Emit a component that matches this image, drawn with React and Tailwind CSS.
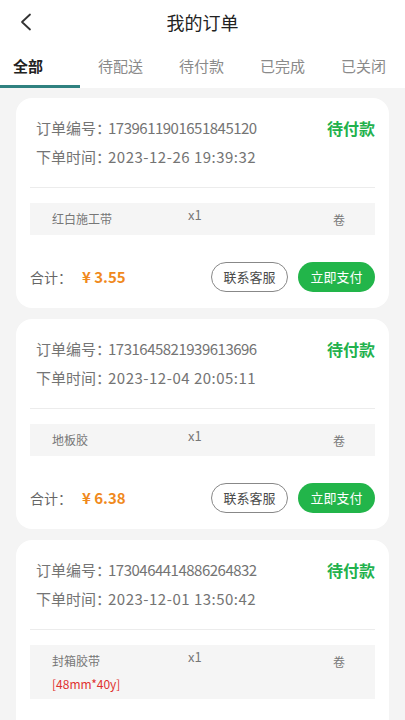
import React from "react";

const orders = [
  { no: "1739611901651845120", time: "2023-12-26 19:39:32", item: "红白施工带", total: "3.55" },
  { no: "1731645821939613696", time: "2023-12-04 20:05:11", item: "地板胶", total: "6.38" },
  { no: "1730464414886264832", time: "2023-12-01 13:50:42", item: "封箱胶带", spec: "[48mm*40y]", total: "2.10" },
];

const tabs = ["全部", "待配送", "待付款", "已完成", "已关闭"];

const OrderCard = ({ o }) => (
  <div className="bg-white rounded-[16px] px-[14px] pt-[19px] pb-[16px]">
    {/* order info */}
    <div className="flex justify-between pl-[6px]">
      <div className="text-[15px] text-[#747474] leading-[22px]">
        <p>
          订单编号：<span className="-ml-[3px] tracking-[-0.5px]">{o.no}</span>
        </p>
        <p className="mt-[7px]">
          下单时间：<span className="-ml-[3px] tracking-[0.5px]">{o.time}</span>
        </p>
      </div>
      <span className="text-[16px] font-bold text-[#22b14c] leading-[22px]">待付款</span>
    </div>

    <div className="h-px bg-[#ececec] mt-[19px]"></div>

    {/* item */}
    <div className="mt-[15px] bg-[#f5f5f5] flex items-start pl-[22px] pr-[30px] pt-[7px] pb-[6px] text-[12px] text-[#777]">
      <div className="w-[136px]">
        <p className="leading-[18px]">{o.item}</p>
        {o.spec && <p className="text-[12px] text-[#e0312f] leading-[18px] mt-[5px]">{o.spec}</p>}
      </div>
      <span className="text-[13px] leading-[14px] -mt-[2px]">x1</span>
      <span className="ml-auto leading-[18px] pt-[1px]">卷</span>
    </div>

    {/* footer */}
    <div className="flex items-center h-[30px] mt-[27px]">
      <span className="text-[14px] text-[#666] w-[52px]">合计：</span>
      <span className="text-[15px] font-bold text-[#f0891c]">¥ {o.total}</span>
      <button className="ml-auto w-[77px] h-[30px] rounded-full border border-[#888] text-[13px] text-[#4a4a4a]">
        联系客服
      </button>
      <button className="ml-[10px] w-[77px] h-[30px] rounded-full bg-[#22b54a] text-[13px] text-white">
        立即支付
      </button>
    </div>
  </div>
);

export default function App() {
  return (
    <div
      className="w-[405px] h-[720px] overflow-hidden bg-[#f4f4f4]"
      style={{ fontFamily: '"Noto Sans CJK SC", "Noto Sans", sans-serif' }}
    >
      {/* header */}
      <div className="bg-white">
        <div className="relative h-[44px] flex items-center justify-center">
          <svg className="absolute left-[19px] top-[13px]" width="14" height="18" viewBox="0 0 14 18" fill="none">
            <path d="M11 1.5 L3 9 L11 16.5" stroke="#333" strokeWidth="1.8" strokeLinecap="round" strokeLinejoin="round" />
          </svg>
          <h1 className="text-[18px] text-[#222]">我的订单</h1>
        </div>

        {/* tabs */}
        <div className="flex h-[44px]">
          {tabs.map((t, i) =>
            i === 0 ? (
              <div key={t} className="w-[80px] relative flex items-center pl-[13px] text-[15px] font-bold text-[#222]">
                {t}
                <div className="absolute left-0 bottom-0 w-[80px] h-[3px] bg-[#2f8180]"></div>
              </div>
            ) : (
              <div key={t} className="w-[81px] flex items-center justify-center text-[15px] text-[#8a8a8a]">
                {t}
              </div>
            )
          )}
        </div>
      </div>

      {/* orders */}
      <div className="px-[16px] pt-[10px] flex flex-col gap-[11px]">
        {orders.map((o) => (
          <OrderCard key={o.no} o={o} />
        ))}
      </div>
    </div>
  );
}
